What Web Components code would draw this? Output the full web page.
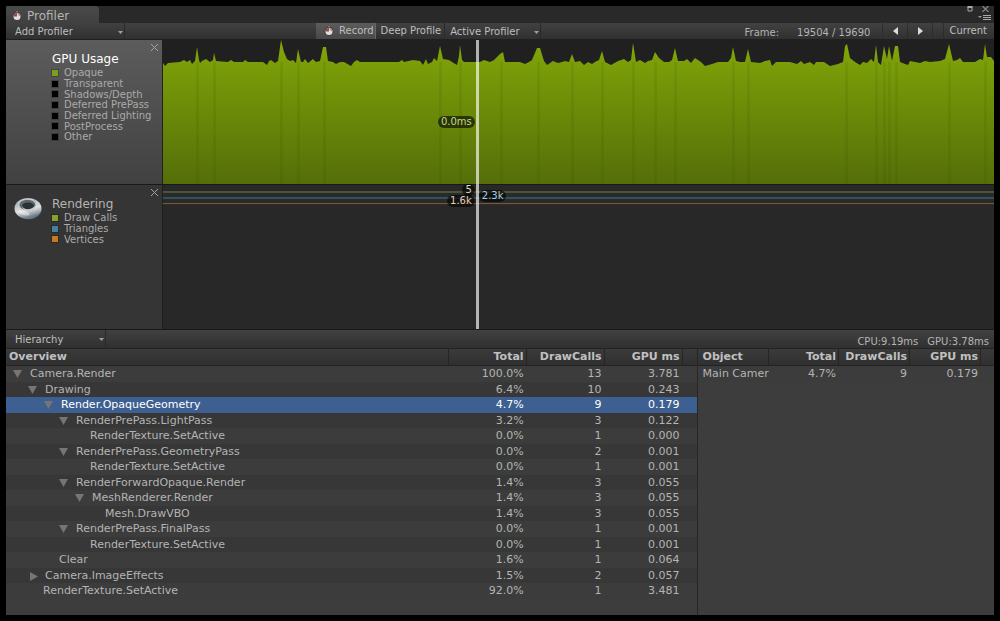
<!DOCTYPE html>
<html lang="en">
<head>
<meta charset="utf-8">
<title>Profiler</title>
<style>
  html { background: #000; }
  body { margin: 0; min-height: 100vh; display: flex; background: #000; color: #b4b4b4; font: 11px/16px "DejaVu Sans", sans-serif; }
</style>
</head>
<body>
<profiler-window>
  <profiler-toolbar slot="toolbar">
    <tool-select label="Add Profiler" wide></tool-select>
    <tool-button slot="middle" pressed icon>Record</tool-button>
    <tool-button slot="middle">Deep Profile</tool-button>
    <tool-select slot="middle" label="Active Profiler"></tool-select>
    <frame-navigator slot="end" frame="19504 / 19690"></frame-navigator>
  </profiler-toolbar>
  <profiler-charts slot="charts">
    <profiler-panel heading="GPU Usage" active>
      <chart-legend items="Opaque:#7d9e1d|Transparent:#000|Shadows/Depth:#000|Deferred PrePass:#000|Deferred Lighting:#000|PostProcess:#000|Other:#000"></chart-legend>
      <usage-chart slot="chart"></usage-chart>
    </profiler-panel>
    <profiler-panel heading="Rendering">
      <ring-icon slot="icon"></ring-icon>
      <chart-legend items="Draw Calls:#86a32c|Triangles:#42819f|Vertices:#c87820"></chart-legend>
      <counter-chart slot="chart"></counter-chart>
    </profiler-panel>
  </profiler-charts>
  <profiler-details slot="details"></profiler-details>
</profiler-window>

<script>
const define = (name, html, setup) => {
  const template = document.createElement('template');
  template.innerHTML = html;
  customElements.define(name, class extends HTMLElement {
    connectedCallback() {
      if (this.shadowRoot) return;
      this.attachShadow({ mode: 'open' }).append(template.content.cloneNode(true));
      if (setup) setup(this, this.shadowRoot);
    }
  });
};

define('stopwatch-icon', `
<style>:host { display: block; width: 10px; height: 10px } svg { display: block }</style>
<svg width="10" height="10" viewBox="0 0 10 10" aria-hidden="true">
  <circle cx="5" cy="5.300" r="4.500" fill="#4e3a3a"/>
  <circle cx="5" cy="5.500" r="3.500" fill="#e2dede"/>
  <path d="M5 5.500V2A3.500 3.500 0 0 0 1.500 5.500Z" fill="#8d4a4f"/>
  <path d="M5 2A3.500 3.500 0 0 1 8.500 5.500L7 5Z" fill="#b08a8a"/>
  <path d="M4 0h2v1.500H4z" fill="#777"/>
</svg>`);

define('ring-icon', `
<style>:host { display: block; width: 30px; height: 26px } svg { display: block }</style>
<svg width="30" height="26" viewBox="0 0 30 26" aria-hidden="true">
  <defs>
    <linearGradient id="g" x1="0" y1="0" x2=".35" y2="1"><stop offset="0" stop-color="#8e9699"/><stop offset=".3" stop-color="#b4babd"/><stop offset=".65" stop-color="#dfe2e2"/><stop offset=".85" stop-color="#a4a9ac"/><stop offset="1" stop-color="#6c7a84"/></linearGradient>
  </defs>
  <ellipse cx="15" cy="14" rx="13" ry="10" fill="#32444f"/>
  <ellipse cx="14" cy="12.500" rx="13.500" ry="10.500" fill="url(#g)"/>
  <ellipse cx="13.500" cy="9" rx="8" ry="5.200" fill="#5b6970"/>
  <ellipse cx="14" cy="10" rx="6" ry="3.600" fill="#2b3134"/>
  <path d="M8 10C9 14 18 14.500 21 9.500C20.500 14 17 15 14 15S8.500 13.500 8 10Z" fill="#c6cbcd"/>
  <ellipse cx="10" cy="17" rx="6" ry="2" fill="#fff" opacity=".4" transform="rotate(16 10 17)"/>
  <path d="M4 7C7 3 13 2.200 19 3.800" fill="none" stroke="#dfe3e4" opacity=".7"/>
</svg>`);

define('tool-button', `
<style>
  :host { display: flex }
  button { all: unset; display: flex; align-items: center; gap: 5px; box-sizing: border-box; height: 16px; padding: 0 3px 0 5px; border-right: 1px solid #2b2b2b; color: #bebebe; white-space: nowrap }
  :host([pressed]) button { background: linear-gradient(#5c5c5c, #484848); padding: 0 1px 0 8px; border-color: #686868 }
  stopwatch-icon { display: none } :host([icon]) stopwatch-icon { display: block }
</style>
<button type="button"><stopwatch-icon></stopwatch-icon><slot></slot></button>`,
(el, root) => root.querySelector('button').setAttribute('aria-pressed', el.hasAttribute('pressed')));

define('tool-select', `
<style>
  :host { display: block; position: relative; width: 96px; font-size: 10px }
  :host([wide]) { width: 119px } :host([medium]) { width: 100px }
  select { appearance: none; display: block; box-sizing: border-box; width: 100%; height: 17px; margin: 0; padding: 0 0 0 5px; border: 0; border-right: 1px solid #292929; border-radius: 0; background: none; color: #bebebe; font: inherit }
  :host([wide]) select, :host([medium]) select { padding-left: 9px }
  :host([medium]) select { height: 19px }
  svg { position: absolute; right: 2px; top: 8px; pointer-events: none }
</style>
<select><option></option></select>
<svg width="5" height="3" viewBox="0 0 5 3" aria-hidden="true"><path d="M0 0h5L2.500 3Z" fill="#a0a0a0"/></svg>`,
(el, root) => {
  root.querySelector('option').textContent = el.getAttribute('label');
  root.querySelector('select').setAttribute('aria-label', el.getAttribute('label'));
});

define('frame-navigator', `
<style>
  :host { display: flex; align-items: center; height: 16px; white-space: nowrap }
  label { padding: 4px 18px 0 0 } output { padding: 4px 12px 0 0 }
  button { all: unset; box-sizing: border-box; height: 16px; border-left: 1px solid #2d2d2d; color: #bebebe }
  .step { width: 25px; display: flex; justify-content: center; align-items: center }
  .now { margin-left: 10px; padding: 0 7px 0 5px }
  .gap { border-left: 1px solid #2d2d2d; height: 16px }
</style>
<label for="f">Frame:</label><output id="f"></output>
<button class="step" type="button" aria-label="Previous frame"><svg width="5" height="8" viewBox="0 0 5 8"><path d="M5 0v8L0 4Z" fill="#dcdcdc"/></svg></button>
<button class="step" type="button" aria-label="Next frame"><svg width="5" height="8" viewBox="0 0 5 8"><path d="M0 0v8L5 4Z" fill="#dcdcdc"/></svg></button>
<span class="gap"></span><button class="now" type="button">Current</button>`,
(el, root) => { root.querySelector('output').textContent = el.getAttribute('frame'); });

define('profiler-toolbar', `
<style>
  :host { display: grid; grid-template-columns: 310px auto 1fr; height: 16px; background: linear-gradient(#414141, #303030); border-bottom: 1px solid #202020; font-size: 10px; line-height: 16px }
  div { display: flex } .end { justify-content: flex-end }
</style>
<div><slot></slot></div><div><slot name="middle"></slot></div><div class="end"><slot name="end"></slot></div>`);

define('profiler-window', `
<style>
  :host { flex: 1; min-width: 0; display: flex; flex-direction: column; margin: 6px; background: #3d3d3d }
  header { display: flex; justify-content: space-between; height: 17px; background: #292929 }
  .tab { all: unset; display: flex; align-items: center; gap: 5px; box-sizing: border-box; width: 93px; padding: 3px 0 0 6px; border-radius: 2px 4px 0 0; background: linear-gradient(#4a4a4a, #404040); color: #b4b4b4; font-size: 12px; line-height: 14px }
  .win { display: grid; grid-template-columns: auto auto; grid-template-rows: 6px 10px; column-gap: 9px; justify-items: end; align-items: center; padding-right: 3px }
  .win button { all: unset; display: flex }
  .win button:nth-child(2) { padding-right: 2px }
  .win .menu { grid-column: 1 / 3; padding-top: 2px }
  ::slotted([slot=details]) { flex: 1 }
</style>
<header>
  <button class="tab" type="button"><stopwatch-icon></stopwatch-icon>Profiler</button>
  <div class="win">
    <button type="button" aria-label="Maximize"><svg width="6" height="6" viewBox="0 0 6 6"><path d="M.5 1h5" stroke="#a8a8a8" stroke-width="2"/><path d="M1 1v4h4V1" fill="none" stroke="#a8a8a8"/></svg></button>
    <button type="button" aria-label="Close"><svg width="7" height="6" viewBox="0 0 7 6"><path d="M.5 0l6 6M6.500 0l-6 6" stroke="#858585" stroke-width="1.300"/></svg></button>
    <button class="menu" type="button" aria-label="Menu"><svg width="13" height="6" viewBox="0 0 13 6"><path d="M0 1h4L2 3Z" fill="#999"/><path d="M5 .5h8M5 2.500h8M5 4.500h8" stroke="#aaa"/></svg></button>
  </div>
</header>
<slot name="toolbar"></slot><slot name="charts"></slot><slot name="details"></slot>`);

define('profiler-charts', `
<style>
  :host { position: relative; display: block; --cursor: 38% }
  .over { position: absolute; inset: 0 0 0 157px; pointer-events: none }
  .line { position: absolute; left: calc(var(--cursor) - 3px); top: 0; bottom: 1px; width: 3px; background: #fff; opacity: .65 }
  .tag { position: absolute; line-height: 12px; padding: 0 3px; border-radius: 6px; font-size: 10px; background: rgba(0,0,0,.6) }
  .before { right: calc(100% - var(--cursor) + 4px) }
  .after { left: var(--cursor) }
</style>
<slot></slot>
<div class="over">
  <span class="line"></span>
  <span class="tag before" style="top:76px;color:#c4d490">0.0ms</span>
  <span class="tag before" style="top:144px;color:#d6dcb8">5</span>
  <span class="tag before" style="top:155px;color:#e8cbae">1.6k</span>
  <span class="tag after" style="top:150px;color:#a9cde0">2.3k</span>
</div>`);

define('profiler-panel', `
<style>
  :host { display: flex; height: 144px; border-bottom: 1px solid #191919; background: #282828 }
  aside { display: grid; grid-template-columns: 36px minmax(0, 1fr) 12px; column-gap: 2px; align-items: start; align-content: start; box-sizing: border-box; width: 156px; padding: 3px 0 0 8px; background: #353535 }
  :host([active]) aside { background: linear-gradient(#5c5c5c, #414141) }
  .icon, .body { padding-top: 8px }
  h2 { margin: 0; font-size: 12px; font-weight: 400; line-height: 16px } :host([active]) h2 { color: #fff }
  button { all: unset; display: flex }
  .plot { flex: 1; min-width: 0; border-left: 1px solid #202020 }
</style>
<aside><div class="icon"><slot name="icon"></slot></div><div class="body"><h2></h2><slot></slot></div>
<button type="button" aria-label="Remove"><svg width="9" height="9" viewBox="0 0 9 9"><path d="M1 1l7 7M8 1l-7 7" stroke="#a4a4a4"/></svg></button></aside>
<div class="plot"><slot name="chart"></slot></div>`,
(el, root) => { root.querySelector('h2').textContent = el.getAttribute('heading'); });

define('chart-legend', `
<style>
  :host { display: block; white-space: nowrap }
  ul { list-style: none; margin: 0; padding: 0; display: grid; grid-template-columns: max-content }
  li { display: flex; align-items: center; gap: 6px; font-size: 10px; line-height: 11px; height: 11px; color: #aaa }
  li:nth-child(3n) { height: 10px }
  i { flex: none; width: 6px; height: 6px; outline: 1px solid rgba(0,0,0,.2) }
</style><ul></ul>`,
(el, root) => {
  for (const item of el.getAttribute('items').split('|')) {
    const [name, color] = item.split(':');
    const li = document.createElement('li'), swatch = document.createElement('i');
    swatch.style.background = color;
    li.append(swatch, name);
    root.querySelector('ul').append(li);
  }
});

// Frame samples, as x,y pairs in the plot's own coordinate space.
const samples = `163,63 165,66 168,63 180,62 184,60 187,62 190,60 192,64 195,61 197,47 199,60 200,63 202,61 206,59 210,62 213,60 214,53 216,61 228,62 231,60 234,62 243,62 245,60 248,62 263,62 267,65 269,61 271,60 275,63 278,61 281,40 284,52 287,59 290,61 293,60 296,63 298,49 301,62 303,62 305,59 308,63 313,59 316,62 320,61 323,47 326,47 328,61 333,62 336,64 340,62 344,62 351,66 354,62 357,60 360,62 399,62 402,60 404,62 413,60 420,61 423,65 426,59 428,64 432,62 434,58 437,61 440,46 443,59 449,60 452,62 457,65 459,56 460,45 462,60 464,62 480,62 484,60 490,62 494,60 498,56 500,54 503,52 505,62 520,62 525,64 529,62 532,60 537,48 540,48 544,61 547,65 553,61 558,63 562,62 565,61 569,62 572,54 575,62 580,61 584,65 588,62 592,64 595,62 599,60 602,51 605,62 611,65 618,61 624,59 628,62 631,60 633,43 636,62 640,60 645,63 648,61 652,60 655,52 659,58 664,62 669,62 672,60 675,48 678,61 684,61 687,59 691,63 695,58 701,62 705,66 712,64 718,62 728,62 731,58 733,47 736,61 740,62 745,62 748,49 751,62 760,63 765,61 770,60 772,66 776,62 786,62 790,62 797,64 801,61 804,64 810,62 814,65 816,62 824,62 830,66 838,64 843,62 845,46 847,44 850,58 855,62 860,65 863,62 867,63 871,59 874,62 876,45 878,62 881,65 884,46 887,59 889,46 892,61 895,46 898,46 900,62 905,64 908,65 910,61 920,63 925,61 930,62 940,61 945,59 949,44 953,61 957,60 960,58 963,62 975,62 980,59 983,60 985,44 987,57 991,57 994,61`;
const spikes = [197, 214, 281, 298, 324, 440, 460, 501, 538, 572, 602, 633, 655, 675, 733, 748, 846, 876, 884, 889, 896, 949, 985];

define('usage-chart', `
<style>:host { display: block; height: 144px; background: #202020 } svg { display: block; width: 100%; height: 144px }</style>
<svg viewBox="163 40 831 144" preserveAspectRatio="none" role="img" aria-label="GPU usage per frame">
  <defs><linearGradient id="g" gradientUnits="userSpaceOnUse" x1="0" y1="40" x2="0" y2="184"><stop offset="0" stop-color="#85a80b"/><stop offset=".2" stop-color="#789b08"/><stop offset="1" stop-color="#556e09"/></linearGradient></defs>
  <path fill="url(#g)" d="M163 184L${samples} 994 184Z"/>
  <g fill="#203c00" opacity=".08">${spikes.map(x => `<path d="M${x - 1} 62h3v122h-3z"/>`).join('')}</g>
</svg>`);

define('counter-chart', `
<style>:host { display: block } svg { display: block; width: 100%; height: 144px }</style>
<svg viewBox="0 0 831 144" preserveAspectRatio="none" role="img" aria-label="Rendering counters per frame">
  <path fill="#272c2b" d="M0 6h831v12H0z"/>
  <path fill="#4d5536" d="M0 6h831v2H0z"/><path fill="#34505f" d="M0 12h831v2H0z"/><path fill="#77583b" d="M0 18h831v1H0z"/><path fill="#342a21" d="M0 19h831v1H0z"/>
</svg>`);

define('data-grid', `
<style>
  :host { display: block; min-width: 0 }
  table { width: 100%; border-collapse: separate; border-spacing: 0; table-layout: fixed }
  th { box-sizing: border-box; height: 17px; padding: 0 2px; border-right: 1px solid #252525; border-bottom: 1px solid #222; background: linear-gradient(#3a3a3a, #303030); text-align: right; vertical-align: top; line-height: 15px; color: #c0c0c0 }
  th:last-child { border-right: 0 }
  th:first-child { text-align: left; padding-left: 3px }
  td { height: 15px; padding: 0 3px; line-height: 15px; text-align: right; white-space: nowrap; overflow: hidden }
  tr:nth-child(odd) td { height: 16px; line-height: 16px; background: #3c3c3c }
  tr:nth-child(even) td { background: #373737 }
  td:first-child { text-align: left; padding-right: 0 }
  tr.selected td { background: #3d5f91; color: #fff }
  button { all: unset; display: inline-block; width: 17px; vertical-align: top; height: 15px }
  svg { display: block; padding-top: 2px }
  :host(:not([tree])) th:first-child, :host(:not([tree])) td:first-child { padding-left: 5px }
</style>
<table><colgroup></colgroup><thead><tr></tr></thead><tbody></tbody></table>`,
(el, root) => {
  const { columns, widths, rows } = el.data;
  const make = (tag, text) => { const n = document.createElement(tag); n.textContent = text; return n; };
  for (const w of widths) {
    const col = document.createElement('col');
    if (w) col.style.width = w;
    root.querySelector('colgroup').append(col);
  }
  for (const c of columns) root.querySelector('thead tr').append(make('th', c));
  for (const row of rows) {
    const tr = document.createElement('tr');
    const name = make('td', '');
    if (row.node) {
      const indent = Math.floor(row.level * 15.5);
      if (row.node === 'leaf') name.style.paddingLeft = `${indent + 22}px`;
      else {
        name.style.paddingLeft = `${indent + 7}px`;
        const toggle = document.createElement('button');
        toggle.type = 'button';
        toggle.setAttribute('aria-label', row.node === 'open' ? 'Collapse' : 'Expand');
        toggle.innerHTML = `<svg width="10" height="9" viewBox="0 0 10 9"><path d="${row.node === 'open' ? 'M0 0h9L4.500 8Z' : 'M2 0v9L10 4.500Z'}" fill="#757575"/></svg>`;
        name.append(toggle);
      }
    }
    name.append(row.name);
    tr.append(name, ...row.values.map(v => make('td', v)), make('td', ''));
    if (row.selected) tr.className = 'selected';
    root.querySelector('tbody').append(tr);
  }
});

const tree = [
  [0, 'open', 'Camera.Render', '100.0%', '13', '3.781'],
  [1, 'open', 'Drawing', '6.4%', '10', '0.243'],
  [2, 'open', 'Render.OpaqueGeometry', '4.7%', '9', '0.179'],
  [3, 'open', 'RenderPrePass.LightPass', '3.2%', '3', '0.122'],
  [4, 'leaf', 'RenderTexture.SetActive', '0.0%', '1', '0.000'],
  [3, 'open', 'RenderPrePass.GeometryPass', '0.0%', '2', '0.001'],
  [4, 'leaf', 'RenderTexture.SetActive', '0.0%', '1', '0.001'],
  [3, 'open', 'RenderForwardOpaque.Render', '1.4%', '3', '0.055'],
  [4, 'open', 'MeshRenderer.Render', '1.4%', '3', '0.055'],
  [5, 'leaf', 'Mesh.DrawVBO', '1.4%', '3', '0.055'],
  [3, 'open', 'RenderPrePass.FinalPass', '0.0%', '1', '0.001'],
  [4, 'leaf', 'RenderTexture.SetActive', '0.0%', '1', '0.001'],
  [2, 'leaf', 'Clear', '1.6%', '1', '0.064'],
  [1, 'closed', 'Camera.ImageEffects', '1.5%', '2', '0.057'],
  [1, 'leaf', 'RenderTexture.SetActive', '92.0%', '1', '3.481'],
];

define('profiler-details', `
<style>
  :host { display: flex; flex-direction: column }
  .bar { display: flex; justify-content: space-between; height: 18px; border-bottom: 1px solid #232323; background: linear-gradient(#414141, #303030) }
  .stats { display: flex; gap: 9px; padding: 5px 5px 0 0; font-size: 10px; line-height: 13px }
  .grids { flex: 1; display: grid; grid-template-columns: 7fr 3fr }
  .left { border-right: 1px solid #262626 }
</style>
<div class="bar"><tool-select label="Hierarchy" medium></tool-select><div class="stats"><span>CPU:9.19ms</span><span>GPU:3.78ms</span></div></div>
<div class="grids"><div class="left"></div><div class="right"></div></div>`,
(el, root) => {
  const left = document.createElement('data-grid'), right = document.createElement('data-grid');
  left.setAttribute('tree', '');
  left.data = {
    columns: ['Overview', 'Total', 'DrawCalls', 'GPU ms', ''], widths: ['', '78px', '78px', '78px', '14px'],
    rows: tree.map(([level, node, name, ...values]) => ({ level, node, name, values, selected: name === 'Render.OpaqueGeometry' })),
  };
  right.data = {
    columns: ['Object', 'Total', 'DrawCalls', 'GPU ms', ''], widths: ['', '70px', '71px', '71px', '13px'],
    rows: [{ name: 'Main Camer', values: ['4.7%', '9', '0.179'] }],
  };
  root.querySelector('.left').append(left);
  root.querySelector('.right').append(right);
});
</script>
</body>
</html>
